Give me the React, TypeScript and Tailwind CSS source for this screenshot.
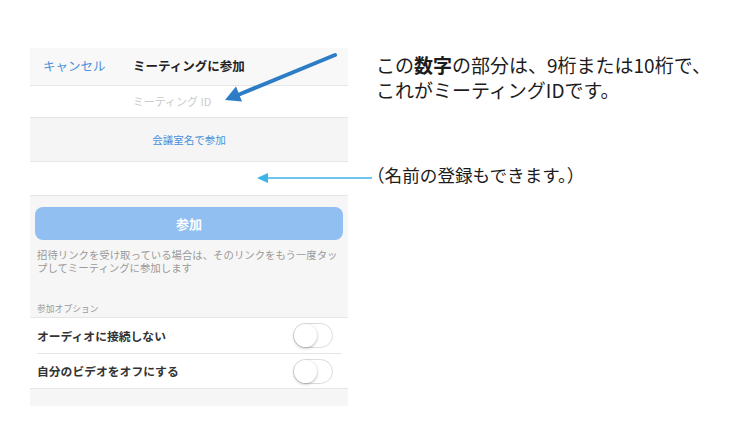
import React from "react";

const jp = { fontFamily: '"Noto Sans CJK JP", "Noto Sans", sans-serif' };

function Toggle() {
  return (
    <div className="relative h-[25px] w-[40px] rounded-full border border-[#dcdcdc] bg-white">
      <div className="absolute left-0 top-0 h-[23px] w-[23px] rounded-full bg-white shadow-[0_1px_3px_rgba(0,0,0,0.3)]" />
    </div>
  );
}

export default function App() {
  return (
    <div className="relative flex h-[443px] w-[743px] overflow-hidden bg-white" style={jp}>
      {/* phone screen */}
      <div className="ml-[30px] mt-[48px] flex h-[358px] w-[318px] shrink-0 flex-col bg-[#f6f6f6]">
        <div className="grid h-[38px] grid-cols-[1fr_auto_1fr] items-center border-b border-[#e6e6e6] bg-[#f8f8f8] px-[13px]">
          <span className="text-[12.5px] text-[#4a90d9]">キャンセル</span>
          <span className="text-[12.5px] font-bold text-[#222]">ミーティングに参加</span>
          <span />
        </div>
        <div className="flex h-[32px] items-center justify-center border-b border-[#e6e6e6] bg-white pr-[34px]">
          <span className="text-[11px] text-[#cacaca]">ミーティング ID</span>
        </div>
        <div className="flex h-[44px] items-center justify-center border-b border-[#e6e6e6] bg-[#f5f5f5]">
          <span className="text-[10.5px] text-[#4a90d9]">会議室名で参加</span>
        </div>
        <div className="h-[34px] border-b border-[#e6e6e6] bg-white" />
        <div className="flex flex-col px-[5px] pt-[11px]">
          <div className="flex h-[33px] items-center justify-center rounded-[8px] bg-[#92bff1]">
            <span className="text-[13px] font-bold text-white">参加</span>
          </div>
          <p className="mt-[8px] px-[2px] text-[10.4px] leading-[13px] text-[#9a9a9a]">
            招待リンクを受け取っている場合は、そのリンクをもう一度タップしてミーティングに参加します
          </p>
          <p className="mt-[29px] px-[2px] text-[8.8px] leading-[12px] text-[#9a9a9a]">参加オプション</p>
        </div>
        <div className="mt-[2px] flex flex-col border-y border-[#e6e6e6] bg-white">
          <div className="flex h-[35px] items-center justify-between pl-[7px] pr-[15px]">
            <span className="text-[11.8px] font-bold text-[#333]">オーディオに接続しない</span>
            <Toggle />
          </div>
          <div className="ml-[7px] mr-[6px] h-px bg-[#e6e6e6]" />
          <div className="flex h-[34px] items-center justify-between pl-[7px] pr-[15px]">
            <span className="text-[11.8px] font-bold text-[#333]">自分のビデオをオフにする</span>
            <Toggle />
          </div>
        </div>
      </div>

      {/* annotations */}
      <div className="flex flex-col pl-[19px] pt-[52px]">
        <p className="pl-[9px] text-[19px] leading-[25px] text-[#1c1c1c]">
          この<b>数字</b>の部分は、9桁または10桁で、
          <br />
          これがミーティングIDです。
        </p>
        <p className="mt-[60px] text-[17.6px] leading-[25px] text-[#1c1c1c]">（名前の登録もできます。）</p>
      </div>

      <svg className="pointer-events-none absolute left-0 top-0" width="743" height="443">
        <line x1="335" y1="55" x2="239" y2="94.5" stroke="#2c7cc6" strokeWidth="4" strokeLinecap="round" />
        <polygon points="225,100 242,101.5 236,86.5" fill="#2c7cc6" />
        <line x1="372" y1="178" x2="265" y2="178" stroke="#3db3e8" strokeWidth="1.6" />
        <polygon points="257,178 268,173 268,183" fill="#3db3e8" />
      </svg>
    </div>
  );
}
